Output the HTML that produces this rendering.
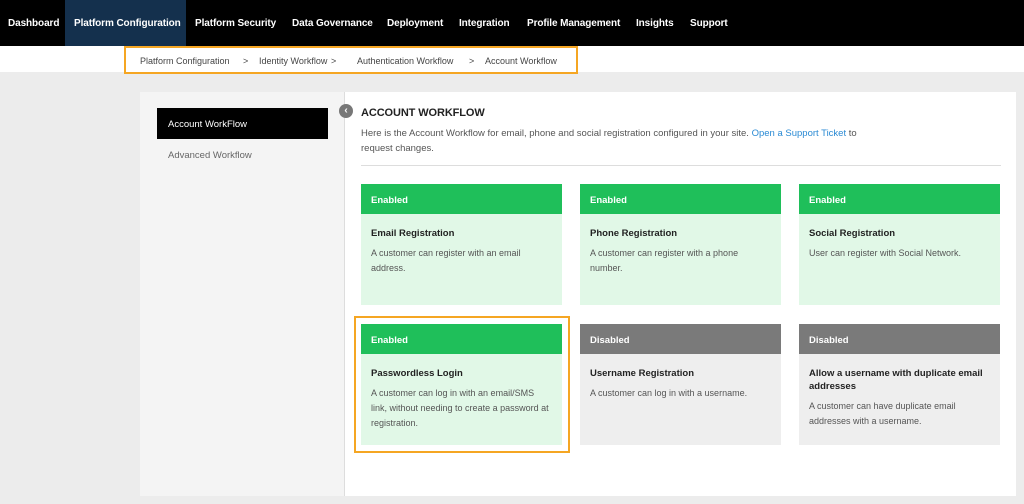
<!DOCTYPE html>
<html><head><style>
*{margin:0;padding:0;box-sizing:border-box}
body{width:1024px;height:504px;background:#ececec;font-family:"Liberation Sans",sans-serif;position:relative;overflow:hidden}
.nav{position:absolute;top:0;left:0;width:1024px;height:46px;background:#000;color:#fff;font-size:10px;font-weight:bold}
.nav span{position:absolute;top:18px;letter-spacing:-0.1px}
.nav .act{position:absolute;left:65px;top:0;width:121px;height:46px;background:#14304d}
.bc{position:absolute;top:46px;left:0;width:1024px;height:26px;background:#fff}
.bcbox{position:absolute;left:124px;top:46px;width:454px;height:28px;border:2px solid #f5a623;font-size:9px;color:#444}
.bcbox span{position:absolute;top:8px}
.panel{position:absolute;left:140px;top:92px;width:876px;height:404px;background:#fff}
.side{position:absolute;left:0;top:0;width:205px;height:404px;background:#f4f4f4;border-right:1px solid #ddd}
.sa{position:absolute;left:17px;top:16px;width:171px;height:31px;background:#000;color:#fff;font-size:9.5px;padding:11px 11px}
.sb{position:absolute;left:28px;top:58px;font-size:9.5px;color:#666}
.circ{position:absolute;left:339px;top:104px;width:14px;height:14px;border-radius:50%;background:#777;color:#fff;font-size:10px;line-height:13px;text-align:center;font-weight:bold}
h1{position:absolute;left:361px;top:107px;font-size:11px;color:#222;letter-spacing:-0.1px}
.desc{position:absolute;left:361px;top:126px;font-size:9.5px;color:#555;line-height:15px;width:520px}
.desc a{color:#2a8ad4;text-decoration:none}
.hr{position:absolute;left:361px;top:165px;width:640px;height:1px;background:#ddd}
.card{position:absolute;width:201px;height:121px;background:#e1f8e7}
.card .h{height:30px;background:#1fbf5a;color:#fff;font-size:9.5px;font-weight:bold;padding:11px 10px}
.card.d{background:#eeeeee}.card.d .h{background:#7a7a7a}
.card .t{font-size:9.5px;font-weight:bold;color:#222;padding:13px 10px 0;line-height:13px}
.card .p{font-size:9px;color:#555;padding:6px 10px 0;line-height:15px}
.hl{position:absolute;left:354px;top:316px;width:216px;height:137px;border:2.5px solid #f5a623}
</style></head><body>
<div class="nav"><div class="act"></div>
<span style="left:8px">Dashboard</span><span style="left:74px">Platform Configuration</span><span style="left:195px">Platform Security</span><span style="left:292px">Data Governance</span><span style="left:387px">Deployment</span><span style="left:459px">Integration</span><span style="left:527px">Profile Management</span><span style="left:636px">Insights</span><span style="left:690px">Support</span></div>
<div class="bc"></div>
<div class="bcbox"><span style="left:14px">Platform Configuration</span><span style="left:117px">&gt;</span><span style="left:133px">Identity Workflow</span><span style="left:205px">&gt;</span><span style="left:231px">Authentication Workflow</span><span style="left:343px">&gt;</span><span style="left:359px">Account Workflow</span></div>
<div class="panel"><div class="side"><div class="sa">Account WorkFlow</div><div class="sb">Advanced Workflow</div></div></div>
<div class="circ">‹</div>
<h1>ACCOUNT WORKFLOW</h1>
<div class="desc">Here is the Account Workflow for email, phone and social registration configured in your site. <a>Open a Support Ticket</a> to<br>request changes.</div>
<div class="hr"></div>
<div class="card" style="left:361px;top:184px"><div class="h">Enabled</div><div class="t">Email Registration</div><div class="p">A customer can register with an email address.</div></div>
<div class="card" style="left:580px;top:184px"><div class="h">Enabled</div><div class="t">Phone Registration</div><div class="p">A customer can register with a phone number.</div></div>
<div class="card" style="left:799px;top:184px"><div class="h">Enabled</div><div class="t">Social Registration</div><div class="p">User can register with Social Network.</div></div>
<div class="card" style="left:361px;top:324px"><div class="h">Enabled</div><div class="t">Passwordless Login</div><div class="p">A customer can log in with an email/SMS link, without needing to create a password at registration.</div></div>
<div class="card d" style="left:580px;top:324px"><div class="h">Disabled</div><div class="t">Username Registration</div><div class="p">A customer can log in with a username.</div></div>
<div class="card d" style="left:799px;top:324px"><div class="h">Disabled</div><div class="t">Allow a username with duplicate email addresses</div><div class="p">A customer can have duplicate email addresses with a username.</div></div>
<div class="hl"></div>
</body></html>
